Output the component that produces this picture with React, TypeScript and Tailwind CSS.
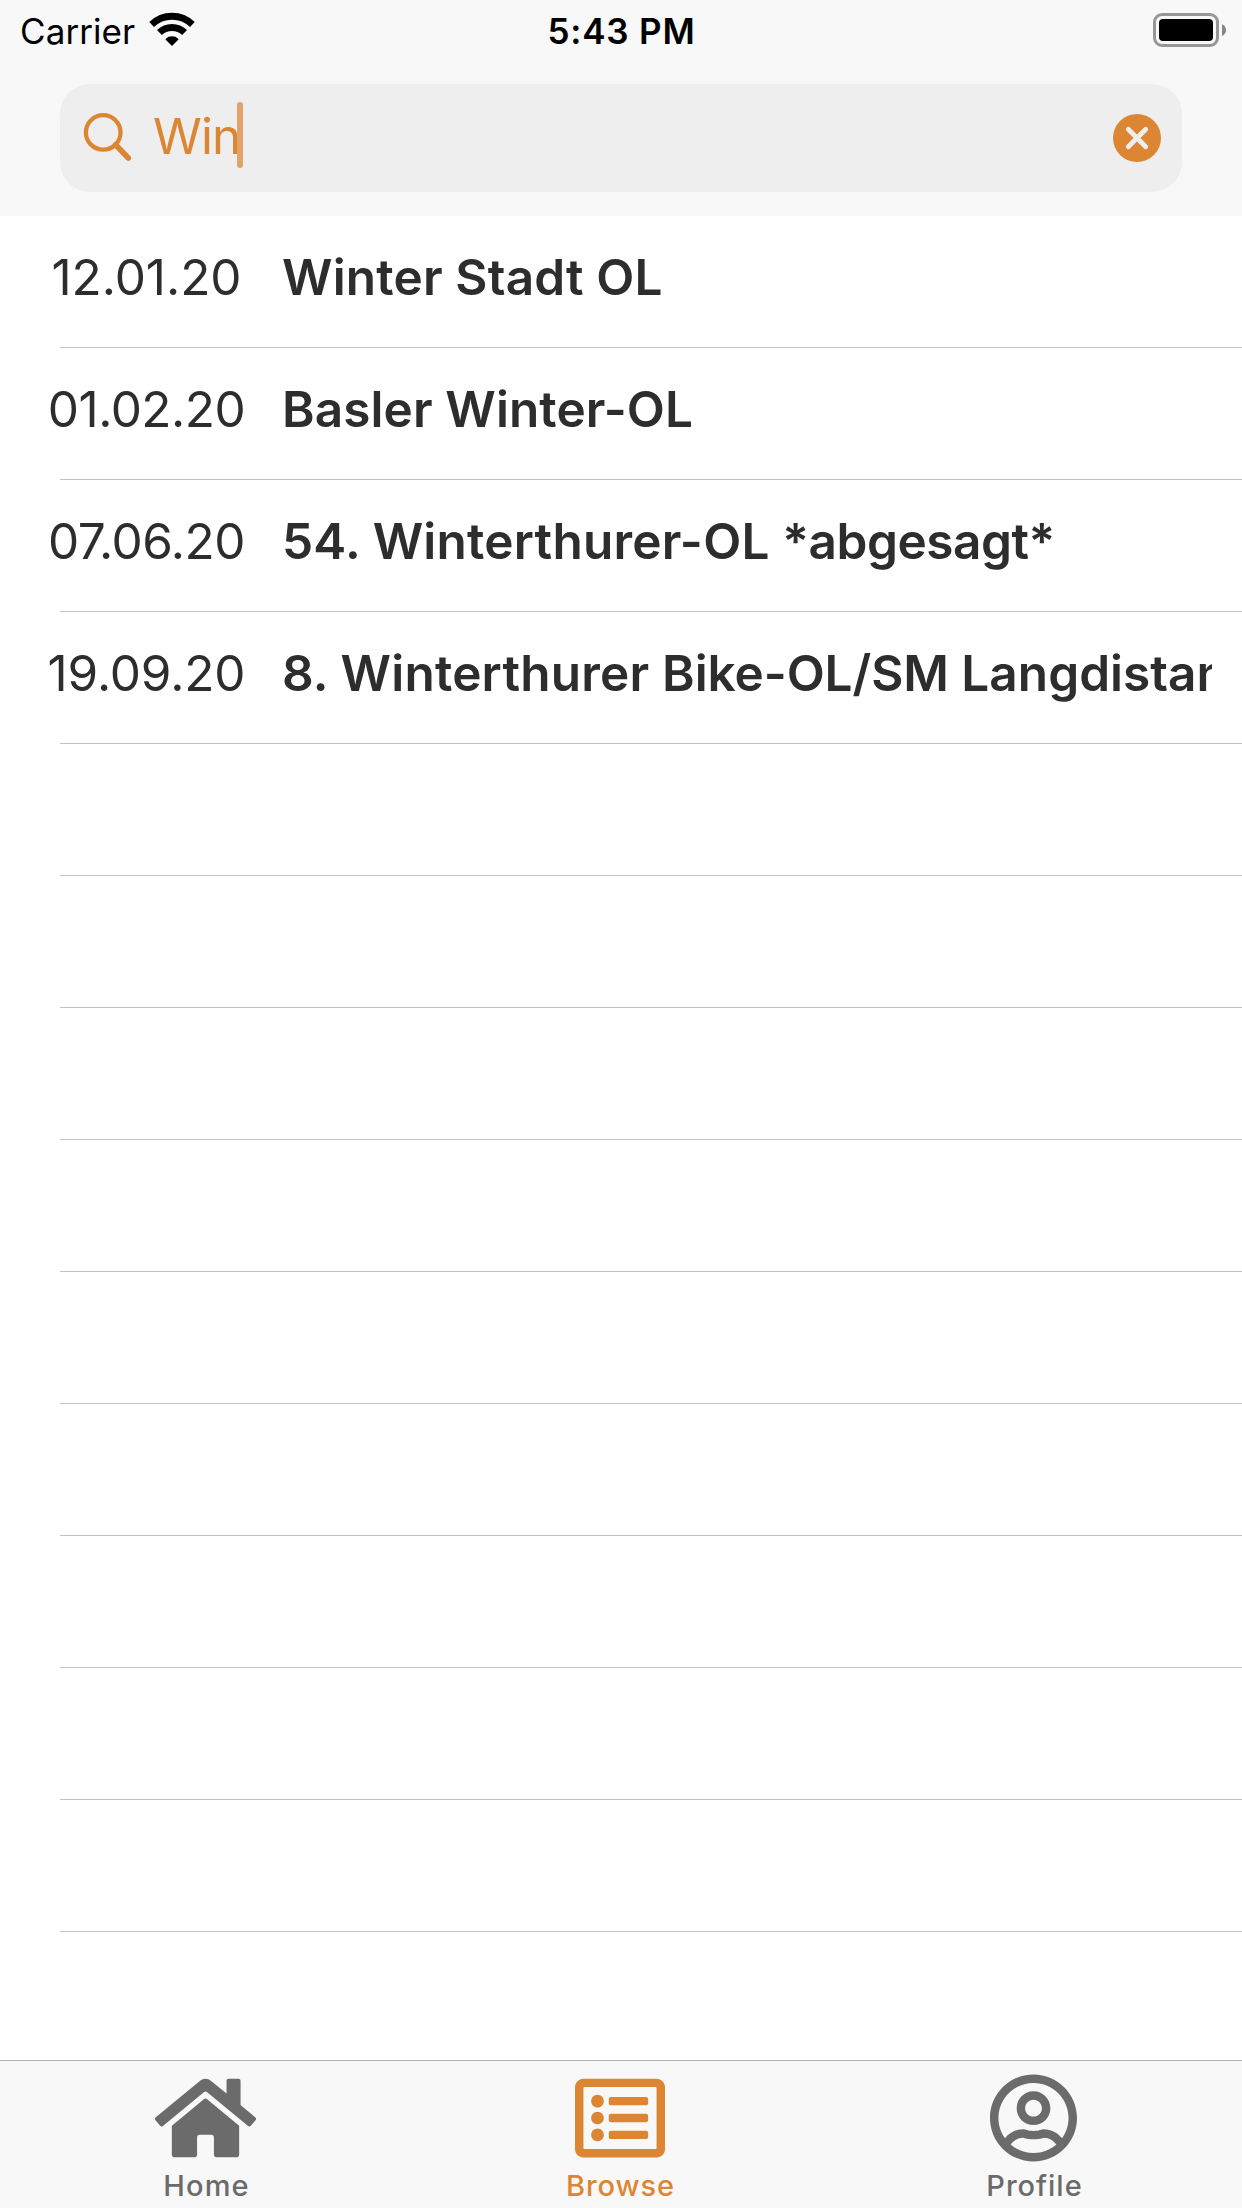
import { FaHome, FaRegListAlt, FaRegUserCircle } from "react-icons/fa";

type Segment = { text: string; tracking: string };
type Race = { date: string; dateClass: string; title: Segment[] };

const races: Race[] = [
  {
    date: "12.01.20",
    dateClass: "tracking-[-0.06px]",
    title: [{ text: "Winter Stadt OL", tracking: "tracking-[0.18px]" }],
  },
  {
    date: "01.02.20",
    dateClass: "tracking-[-0.5px]",
    title: [{ text: "Basler Winter-OL", tracking: "tracking-[0.1px]" }],
  },
  {
    date: "07.06.20",
    dateClass: "tracking-[-0.5px]",
    title: [
      { text: "54. Winterthurer-OL ", tracking: "tracking-[0.24px]" },
      { text: "*abgesagt*", tracking: "tracking-[-0.45px]" },
    ],
  },
  {
    date: "19.09.20",
    dateClass: "tracking-[-0.14px]",
    title: [
      { text: "8. Winterthurer ", tracking: "tracking-[0.22px]" },
      { text: "Bike-OL/SM ", tracking: "tracking-[-0.08px]" },
      { text: "Langdistanz", tracking: "tracking-[0.05px]" },
    ],
  },
];

const EMPTY_ROWS = 9;

function WifiIcon() {
  return (
    <svg className="h-[36px] w-[48px]" viewBox="148 12 48 36" fill="none" stroke="#000">
      <path d="M151.6 24.5A29.3 29.3 0 0 1 192.4 24.5" strokeWidth="6.8" />
      <path d="M159.4 32.5A18.2 18.2 0 0 1 184.6 32.5" strokeWidth="7" />
      <path d="M172 45L166.2 39.2A8.6 8.6 0 0 1 177.8 39.2Z" fill="#000" strokeWidth="1.4" strokeLinejoin="round" />
    </svg>
  );
}

function BatteryIcon() {
  return (
    <svg className="h-[34px] w-[73px]" viewBox="0 0 73 34">
      <rect x="1.5" y="1.5" width="63" height="31" rx="7.5" fill="none" stroke="#979797" strokeWidth="3" />
      <rect x="6" y="6" width="54" height="22" rx="4" fill="#000" />
      <path d="M69 11Q73 13 73 17Q73 21 69 23Z" fill="#858585" />
    </svg>
  );
}

function StatusBar() {
  return (
    <div className="grid h-[62px] grid-cols-3 items-center text-[35px] leading-[62px] text-black">
      <div className="flex items-center pl-5">
        <span className="w-32 tracking-[0.08px]">Carrier</span>
        <span className="-mt-[2px]">
          <WifiIcon />
        </span>
      </div>
      <div className="pl-[1px] text-center font-semibold tracking-[0.8px]">5:43 PM</div>
      <div className="-mt-[2px] flex justify-end pr-4">
        <BatteryIcon />
      </div>
    </div>
  );
}

function SearchField() {
  return (
    <div className="mx-auto mt-[22px] flex h-[108px] w-[1122px] items-center rounded-[30px] bg-[#eeeeee] pr-[21px] pl-6 text-[#dc8633]">
      <svg className="h-[48px] w-[48px] shrink-0 overflow-visible" viewBox="84 114 48 48" fill="none" stroke="currentColor">
        <circle cx="103.2" cy="132.4" r="17.3" strokeWidth="4.3" />
        <path d="M115.6 144.8L128.3 158" strokeWidth="5.6" strokeLinecap="round" />
      </svg>
      <div className="flex flex-1 items-center pl-[21px]">
        <span className="-mt-1 w-[84px] text-[49.5px] leading-[60px] tracking-[-0.88px] whitespace-nowrap">Win</span>
        <span className="relative -mt-[6px] h-[66px] w-[6px] rounded-full bg-[#e1a369]" />
      </div>
      <svg className="h-[48px] w-[48px] shrink-0" viewBox="0 0 48 48">
        <circle cx="24" cy="24" r="24" fill="currentColor" />
        <path d="M15.3 15.3L32.7 32.7M32.7 15.3L15.3 32.7" stroke="#eeeeee" strokeWidth="4.8" strokeLinecap="round" />
      </svg>
    </div>
  );
}

function Row({ race }: { race?: Race }) {
  return (
    <li className="flex h-[132px] flex-col justify-between">
      <div className="flex pt-[31px] pl-[42px] text-[49.5px] leading-[60px] text-[#2d2d2d]">
        {race && (
          <>
            <span className={`w-[209px] text-center whitespace-nowrap ${race.dateClass}`}>{race.date}</span>
            <span className="ml-[31px] w-[930px] overflow-hidden font-semibold whitespace-pre">
              {race.title.map(({ text, tracking }) => (
                <span key={text} className={tracking}>
                  {text}
                </span>
              ))}
            </span>
          </>
        )}
      </div>
      <div className="ml-[60px] h-px bg-[#c3c3c3]" />
    </li>
  );
}

const tabs = [
  { label: "Home", Icon: FaHome, size: "w-[101px] mr-[3px]", tone: "text-[#6b6b6b]", tracking: "tracking-[1.15px]" },
  { label: "Browse", Icon: FaRegListAlt, size: "w-[90px] mr-[2px]", tone: "text-[#dc8633]", tracking: "tracking-[0.92px]" },
  { label: "Profile", Icon: FaRegUserCircle, size: "w-[87px] mr-[3px]", tone: "text-[#6b6b6b]", tracking: "tracking-[0.97px]" },
];

export default function App() {
  return (
    <div className="flex h-[2208px] w-[1242px] flex-col overflow-hidden bg-white font-['Inter',sans-serif]">
      <header className="h-[216px] shrink-0 bg-[#f8f8f8]">
        <StatusBar />
        <SearchField />
      </header>
      <main className="min-h-0 flex-1 overflow-hidden">
        <ul>
          {races.map((race) => (
            <Row key={race.date} race={race} />
          ))}
          {Array.from({ length: EMPTY_ROWS }, (_, i) => (
            <Row key={i} />
          ))}
        </ul>
      </main>
      <nav className="grid h-[148px] shrink-0 grid-cols-3 border-t border-[#b2b2b2] bg-[#f8f8f8]">
        {tabs.map(({ label, Icon, size, tone, tracking }) => (
          <div key={label} className={`flex flex-col items-center pt-3 ${tone}`}>
            <Icon className={`h-[90px] ${size}`} />
            <span className={`mt-[5px] mr-px text-[29px] leading-[35px] font-medium ${tracking}`}>{label}</span>
          </div>
        ))}
      </nav>
    </div>
  );
}
